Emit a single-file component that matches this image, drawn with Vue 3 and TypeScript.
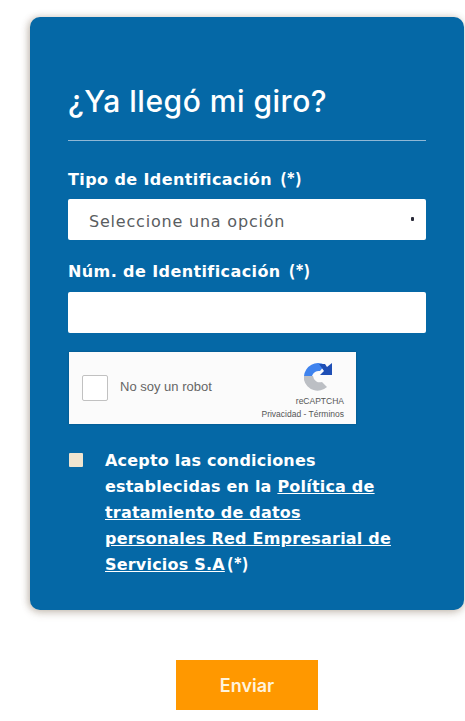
<script setup lang="ts">
const title: string = '¿Ya llegó mi giro?'
</script>

<template>
  <main class="page">
    <form class="card" @submit.prevent>
      <h1 class="title">{{ title }}</h1>
      <hr class="rule" />

      <label class="label first">Tipo de Identificación <span class="req">(*)</span></label>
      <div class="control select">
        <span>Seleccione una opción</span>
        <i class="arrow"></i>
      </div>

      <label class="label second">Núm. de Identificación <span class="req">(*)</span></label>
      <div class="control"></div>

      <div class="captcha">
        <span class="cap-box"></span>
        <span class="cap-text">No soy un robot</span>
        <div class="cap-logo">
          <svg width="30" height="30" viewBox="0 0 30 30">
            <path d="M1 14 A14 14 0 0 1 22 3 L17 9 A7 7 0 0 0 9 14 Z" fill="#3f83ee" />
            <path d="M16 2 L22 2 L24 5 L29 1 L29 13 L17 13 L21 9 Z" fill="#1f4fb5" />
            <path d="M1 14 L10 14 A7 7 0 0 0 19 20 L24 25 A14 14 0 0 1 1 18 Z" fill="#bcbfc4" />
          </svg>
          <span class="cap-brand">reCAPTCHA</span>
          <span class="cap-terms">Privacidad - Términos</span>
        </div>
      </div>

      <div class="accept">
        <span class="check"></span>
        <p class="accept-text">
          Acepto las condiciones<br />
          establecidas en la
          <a href="#" class="link">Política de<br />tratamiento de datos<br />personales Red Empresarial de<br />Servicios S.A</a>
          <span class="req">(*)</span>
        </p>
      </div>
    </form>

    <div class="actions">
      <button class="send" type="button">Enviar</button>
    </div>
  </main>
</template>

<style>
html,
body {
  margin: 0;
  background: #ffffff;
}
</style>

<style scoped>
.page {
  box-sizing: border-box;
  width: 465px;
  height: 721px;
  overflow: hidden;
  padding: 17px 1px 0 30px;
  font-family: "Inter", sans-serif;
}
.card {
  box-sizing: border-box;
  height: 593px;
  padding: 0 38px;
  background: #0568a6;
  border-radius: 10px;
  box-shadow: -2px 0 7px rgba(120, 100, 80, 0.3), 0 3px 8px rgba(120, 100, 80, 0.28);
  color: #fff;
  display: flex;
  flex-direction: column;
  align-items: flex-start;
}
.title {
  margin: 65px 0 0;
  font-size: 30px;
  line-height: 38px;
  font-weight: 500;
  letter-spacing: 0.5px;
}
.rule {
  align-self: stretch;
  margin: 20px 0 0;
  height: 1px;
  border: 0;
  background: #8fb8d6;
}
.label {
  font-family: "DejaVu Sans", sans-serif;
  font-size: 16px;
  line-height: 20px;
  height: 20px;
  font-weight: 700;
  letter-spacing: 0.4px;
}
.label.first {
  margin-top: 29px;
}
.label.second {
  margin-top: 22px;
}
.req {
  margin-left: 2px;
  font-family: "Inter", sans-serif;
  font-weight: 600;
  font-size: 17px;
  line-height: 1;
  letter-spacing: 0;
}
.control {
  box-sizing: border-box;
  align-self: stretch;
  height: 41px;
  margin-top: 10px;
  background: #fff;
  border-radius: 2px;
}
.first + .control {
  margin-top: 9px;
}
.select {
  padding: 3px 12px 0 21px;
  display: flex;
  align-items: center;
  justify-content: space-between;
  color: #5a5d61;
  font-family: "DejaVu Sans", sans-serif;
  font-size: 16px;
  letter-spacing: 0.8px;
}
.arrow {
  width: 3px;
  height: 4px;
  margin-top: -5px;
  background: #2a2a38;
  border-radius: 1px;
}
.captcha {
  box-sizing: border-box;
  width: 287px;
  height: 72px;
  margin: 19px 0 0 1px;
  padding: 0 12px 0 13px;
  background: #fbfbfb;
  box-shadow: 0 0 2px rgba(0, 0, 0, 0.25);
  display: flex;
  align-items: center;
}
.cap-box {
  box-sizing: border-box;
  width: 26px;
  height: 26px;
  margin-top: -1px;
  background: #fff;
  border: 1.5px solid #c1c1c1;
  border-radius: 2px;
}
.cap-text {
  margin-left: 12px;
  margin-top: -3px;
  font-size: 13px;
  font-family: "Liberation Sans", sans-serif;
  color: #666;
}
.cap-logo {
  margin-left: auto;
  display: flex;
  flex-direction: column;
  align-items: flex-end;
  align-self: flex-start;
  margin-top: 10px;
  line-height: 1;
  font-family: "Liberation Sans", sans-serif;
  color: #555;
}
.cap-logo svg {
  margin-right: 11px;
}
.cap-brand {
  margin-top: 5px;
  font-size: 8.5px;
}
.cap-terms {
  margin-top: 4px;
  font-size: 8.5px;
}
.accept {
  display: flex;
  margin-top: 25px;
  align-items: flex-start;
}
.check {
  flex: none;
  width: 14px;
  height: 14px;
  margin-top: 4px;
  margin-left: 1px;
  background: #efe4d0;
  border-radius: 1px;
}
.accept-text {
  width: 296px;
  margin: -1px 0 0 22px;
  font-family: "DejaVu Sans", sans-serif;
  font-size: 16px;
  line-height: 26px;
  font-weight: 700;
  letter-spacing: 0.2px;
}
.link {
  color: #fff;
  text-decoration: underline;
}
.actions {
  display: flex;
  justify-content: center;
  margin-top: 50px;
  width: 434px;
}
.send {
  width: 142px;
  height: 50px;
  border: 0;
  background: #ff9800;
  color: #fff3dc;
  font-family: "Inter", sans-serif;
  font-size: 18px;
  font-weight: 600;
}
</style>
